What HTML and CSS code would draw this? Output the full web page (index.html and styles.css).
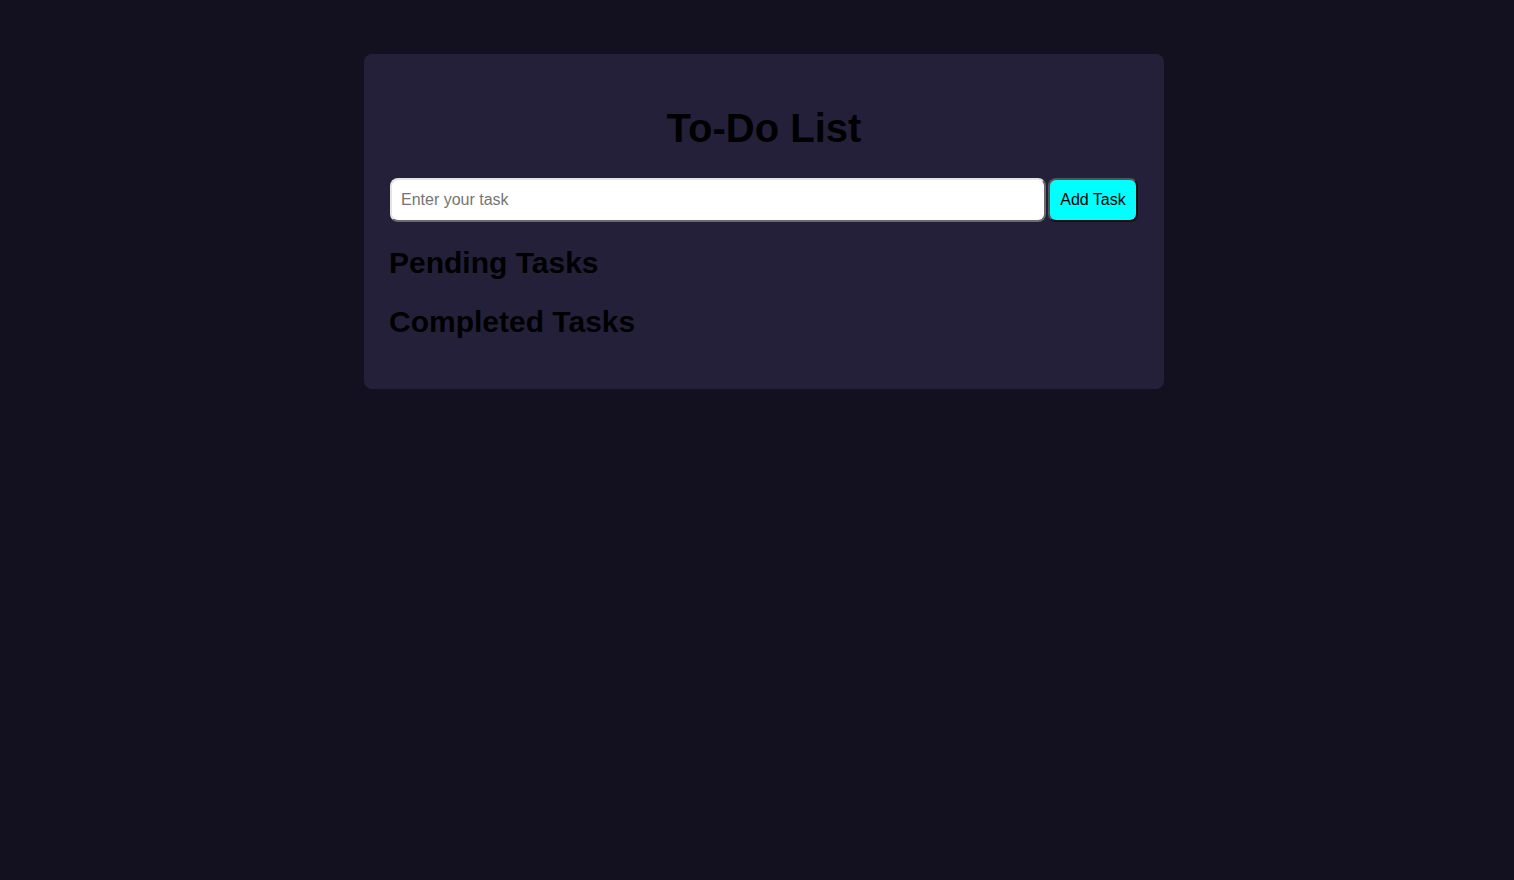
FILE: index.html
```html
<!DOCTYPE html>
<html lang="en">
<head>
<meta charset="utf-8">
<title>To-Do List</title>
<link rel="stylesheet" href="styles.css">
</head>
<body>
<div class="card">
  <h1 class="title">To-Do List</h1>
  <div class="entry">
    <input class="task-input" type="text" placeholder="Enter your task">
    <button class="add-btn">Add Task</button>
  </div>
  <h2 class="section">Pending Tasks</h2>
  <ul class="list"></ul>
  <h2 class="section">Completed Tasks</h2>
  <ul class="list"></ul>
</div>
</body>
</html>
```
FILE: styles.css
```css
html, body {
  margin: 0;
  background: #13111f;
  font-family: "Liberation Sans", Arial, sans-serif;
  color: #000;
}

body {
  padding: 0 0 0 14px;
}

.card {
  width: 800px;
  box-sizing: border-box;
  margin: 54px auto 0;
  padding: 25px;
  background: #24203a;
  border-radius: 8px;
}

.title {
  text-align: center;
  font-size: 40px;
  margin: 0.67em 0;
}

.entry {
  display: flex;
  gap: 2px;
  margin: 0 1px;
}

.task-input {
  flex: 1;
  font-family: "Liberation Sans", Arial, sans-serif;
  font-size: 16px;
  padding: 11px 9px;
  border: 2px solid;
  border-color: #e4e4e4 #6b6b6b #6b6b6b #e4e4e4;
  border-radius: 8px;
  background: #fff;
  outline: none;
}

.task-input::placeholder {
  color: #757575;
}

.add-btn {
  width: 90px;
  font-family: "Liberation Sans", Arial, sans-serif;
  font-size: 16px;
  padding: 11px 8px;
  background: #00ffff;
  color: #000;
  border: 2px solid;
  border-color: #555 #111 #111 #555;
  border-radius: 8px;
}

.section {
  font-size: 30px;
  margin: 0.83em 0;
}

.list {
  margin: 16px 0;
  padding: 0;
}
```
